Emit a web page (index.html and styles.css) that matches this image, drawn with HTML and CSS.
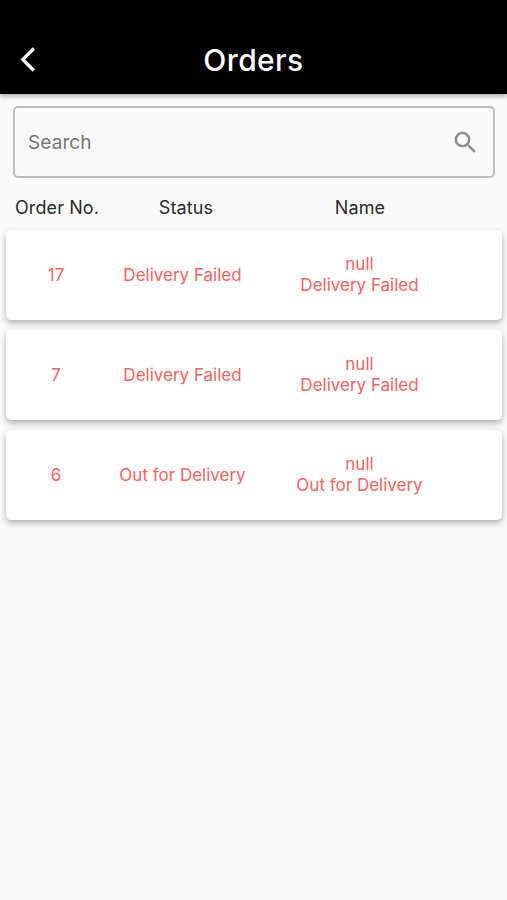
FILE: index.html
```html
<!DOCTYPE html>
<html lang="en">
<head>
    <meta charset="UTF-8">
    <title>Orders</title>
    <link rel="stylesheet" href="styles.css">
</head>
<body>
<header>
    <a class="back" aria-label="Back">
        <svg width="16" height="25" viewBox="0 0 16 25"><path d="M13.8 1.5 2.8 12.5l11 11"/></svg>
    </a>
    <h1>Orders</h1>
</header>
<main>
    <form class="search" onsubmit="return false">
        <input type="text" placeholder="Search" aria-label="Search">
        <svg width="29" height="29" viewBox="0 0 24 24"><path d="M15.5 14h-.79l-.28-.27A6.47 6.47 0 0 0 16 9.5 6.5 6.5 0 1 0 9.5 16c1.61 0 3.09-.59 4.23-1.57l.27.28v.79l5 4.99L20.49 19l-4.99-5zm-6 0a4.5 4.5 0 1 1 0-9 4.5 4.5 0 0 1 0 9z"/></svg>
    </form>
    <div class="row titles">
        <span>Order No.</span>
        <span>Status</span>
        <span>Name</span>
    </div>
    <section class="orders">
        <div class="row card">
            <span>17</span>
            <span>Delivery Failed</span>
            <span>null<br>Delivery Failed</span>
        </div>
        <div class="row card">
            <span>7</span>
            <span>Delivery Failed</span>
            <span>null<br>Delivery Failed</span>
        </div>
        <div class="row card">
            <span>6</span>
            <span>Out for Delivery</span>
            <span>null<br>Out for Delivery</span>
        </div>
    </section>
</main>
</body>
</html>
```
FILE: styles.css
```css
html {
    background-color: #fafafa;
    font-family: Inter, "Liberation Sans", sans-serif;
    height: 100%;
}

body {
    margin: 0;
    min-height: 100%;
}

header {
    display: grid;
    grid-template-columns: 56px 1fr 56px;
    align-items: center;
    box-sizing: border-box;
    height: 94px;
    padding-top: 26px;
    background-color: #000;
    color: #fff;
    box-shadow: 0 2px 5px rgba(0, 0, 0, .35);
}

header h1 {
    margin: 0;
    font-size: 30px;
    font-weight: 500;
    letter-spacing: .4px;
    line-height: 36px;
    text-align: center;
}

.back {
    display: flex;
    padding: 0 0 2px 20px;
}

.back path {
    fill: none;
    stroke: #fff;
    stroke-width: 3.2;
}

.search {
    display: flex;
    align-items: center;
    box-sizing: border-box;
    height: 72px;
    margin: 12px 12px 0 13px;
    padding: 0 13px 0 13px;
    border: 2px solid #bdbdbd;
    border-radius: 5px;
}

.search input {
    flex: 1;
    min-width: 0;
    padding: 0;
    border: none;
    outline: none;
    background: none;
    font: 19px Inter, "Liberation Sans", sans-serif;
    letter-spacing: .1px;
}

.search input::placeholder {
    color: #757575;
}

.search svg {
    fill: #8b8b8b;
}

.row {
    display: grid;
    align-items: center;
    text-align: center;
}

.titles {
    grid-template-columns: 102px 156px 192px;
    box-sizing: border-box;
    height: 52px;
    margin: 0 6px;
    padding-top: 6px;
    font-size: 18px;
    letter-spacing: .1px;
    color: #2b2b2b;
}

.orders {
    display: flex;
    flex-direction: column;
    gap: 10px;
    margin: 0 5px 0 6px;
    padding-bottom: 20px;
}

.card {
    grid-template-columns: 100px 153px 201px;
    height: 90px;
    border-radius: 5px;
    background-color: #fff;
    color: #fb5f62;
    font-size: 17px;
    line-height: 21px;
    box-shadow: 0 3px 6px rgba(0, 0, 0, .3);
}
```
